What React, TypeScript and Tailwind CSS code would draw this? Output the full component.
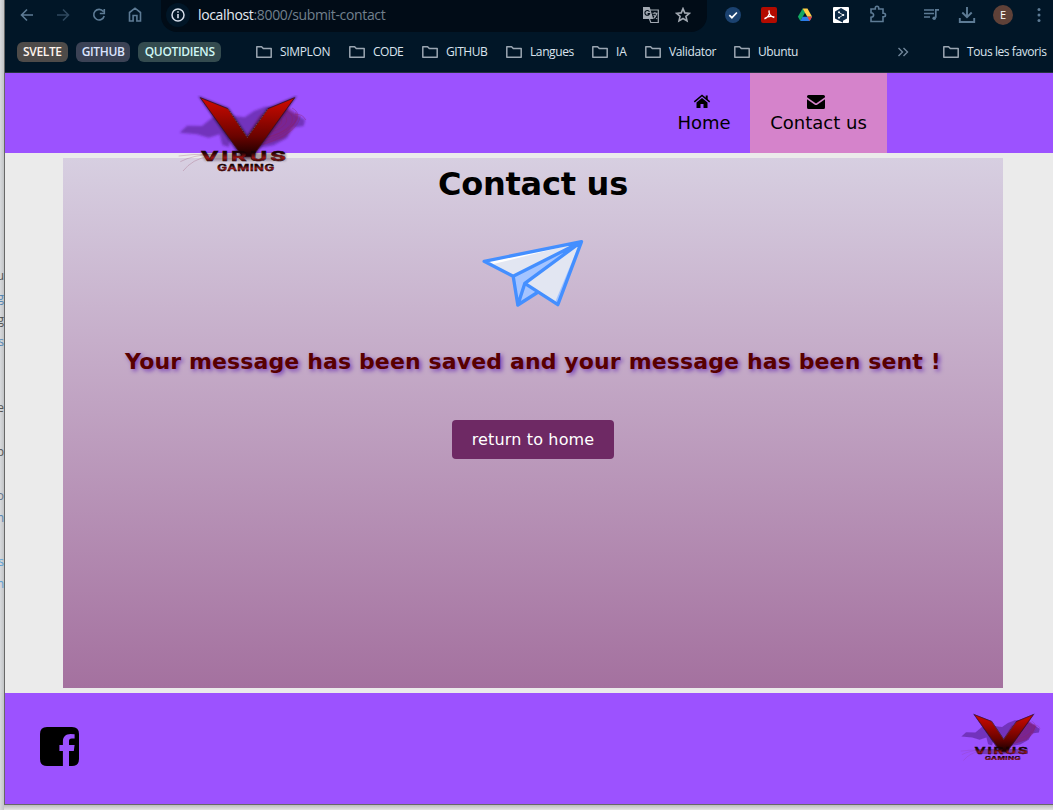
import React from "react";

const uiFont = "font-['Open_Sans','Noto_Sans',sans-serif]";
const pageFont = "font-['DejaVu_Sans',Verdana,sans-serif]";

function Folder() {
  return (
    <svg className="h-4 w-4 shrink-0" viewBox="0 0 16 16" fill="none" stroke="#9ba6b2" strokeWidth="1.5" strokeLinejoin="round">
      <path d="M.8 2.8h4.8l1.7 1.8h7.9v8.6H.8z" />
    </svg>
  );
}

function Bookmark({ label, box }: { label: string; box: string }) {
  return (
    <div className={`flex shrink-0 items-center gap-2 whitespace-nowrap text-[12px] font-medium text-[#dbe4ee] ${box}`}>
      <Folder />
      <span>{label}</span>
    </div>
  );
}

const bookmarks = [
  { label: "SIMPLON", box: "w-[93px] tracking-[-0.35px]" },
  { label: "CODE", box: "w-[73px] tracking-[-0.5px]" },
  { label: "GITHUB", box: "w-[84px] tracking-[-0.45px]" },
  { label: "Langues", box: "w-[86px] tracking-[-0.4px]" },
  { label: "IA", box: "w-[53px] tracking-[-0.2px]" },
  { label: "Validator", box: "w-[89px] tracking-[-0.35px]" },
  { label: "Ubuntu", box: "w-[70px] tracking-[-0.4px]" },
];

function Toolbar() {
  return (
    <div className="flex h-8 items-start text-[#5d7b95]">
      <svg className="h-8 w-[156px] shrink-0" viewBox="5 0 156 32" fill="none" stroke="currentColor" strokeWidth="1.6">
        <path d="M33 15H22M27 9.5 21.5 15 27 20.5" />
        <path opacity=".5" d="M57 15h11M63 9.500 68.500 15 63 20.500" />
        <path d="M103.300 11.500A5.300 5.300 0 1 0 104.200 16M104.300 9v4.500h-4.500" />
        <path d="M129.500 21v-8.500l5.500-4.300 5.500 4.300V21h-3.600v-5.500h-3.800V21z" />
      </svg>
      <div className="flex h-8 w-[546px] shrink-0 items-start rounded-b-2xl bg-[#010c17]">
        <svg className="ml-[5px] mt-[3px] h-6 w-6 shrink-0" viewBox="0 0 24 24">
          <circle cx="12" cy="12" r="12" fill="#011627" />
          <circle cx="12" cy="12" r="6" fill="none" stroke="#d6deeb" strokeWidth="1.5" />
          <path d="M12 11v4.200M12 8.300v1.500" stroke="#d6deeb" strokeWidth="1.600" />
        </svg>
        <span className="ml-2 mt-[5px] w-[444px] whitespace-nowrap text-[14px] leading-5 tracking-[-0.35px] text-[#71808d]">
          <span className="text-[#e4ebf2]">localhost</span>:8000/submit-contact
        </span>
        <svg className="mt-[6px] h-[18px] w-[18px] shrink-0" viewBox="0 0 18 18">
          <path d="M8 4h8.300v12.500H8.800L7.500 13" fill="none" stroke="#a2a9b2" strokeWidth="1.200" />
          <path d="M1 1h6.700l3.600 12H1z" fill="#a2a9b2" />
          <path d="M7.400 5.700A2.400 2.400 0 1 0 7.600 7.600H5.600" fill="none" stroke="#010c17" strokeWidth="1.100" />
          <path d="M10.500 7.300h5M12.900 6v1.300M14.800 7.500c-.6 2.300-1.800 3.800-3.300 5M11.700 8.800c.9 1.900 2 3 3.500 3.900" fill="none" stroke="#a2a9b2" strokeWidth="1.100" />
        </svg>
        <svg className="ml-[15px] mt-[7px] h-4 w-4 shrink-0" viewBox="0 0 16 16" fill="none" stroke="#a2a9b2" strokeWidth="1.600">
          <path d="m8 1.600 1.800 4.300 4.600.4-3.500 3 1.100 4.600L8 11.500l-4 2.400 1.100-4.600-3.500-3 4.600-.4z" />
        </svg>
      </div>
      <svg className="h-8 w-[346px] shrink-0" viewBox="707 0 346 32" fill="none" stroke="currentColor" strokeWidth="1.700">
        <circle cx="733" cy="15" r="8" fill="#1b4270" stroke="none" />
        <path d="m729.300 15.200 2.600 2.500 5-5.200" stroke="#fff" />
        <rect x="761" y="7" width="16" height="16" rx="2" fill="#b30b00" stroke="none" />
        <path d="M764.500 18.800c3.500-1.200 5.400-4.600 4.500-8.400M769 11c-.2 3 1.700 5.500 5.300 6.500M764.500 18.500c3-2 6.400-2.600 9.900-1.500" stroke="#fff" strokeWidth="1.300" />
        <g stroke="none">
          <path d="m802.600 8.500-4.700 8.200 2.400 4.200 4.900-8.300z" fill="#11a861" />
          <path d="M802.600 8.500h4.900l4.600 8.200h-4.800z" fill="#ffcf48" />
          <path d="M800.300 20.900h9.400l2.400-4.200h-9.500z" fill="#2b7de9" />
          <path d="m807.300 16.700 2.400 4.200 2.400-4.200z" fill="#ea4335" />
          <rect x="833" y="7" width="16" height="16" rx="1" fill="#fff" />
          <path d="m841 8 6 3.500v7l-4 2.300v2L835 18.500v-7z" fill="#0f2b46" />
        </g>
        <path d="m839 12.500 4.200 2.500-4.200 2.700" stroke="#fff" strokeWidth=".8" />
        <g fill="#fff" stroke="none"><circle cx="839" cy="12.300" r="1" /><circle cx="843.300" cy="15" r="1" /><circle cx="839" cy="17.700" r="1" /></g>
        <path strokeWidth="1.600" d="M871 9h4.300V8a1.700 1.700 0 0 1 3.400 0v1h4.300v4.300h.8a1.600 1.600 0 0 1 0 3.400h-.8V21.500h-12v-4.200c3.500-.4 3.500-4.200 0-4.600z" />
        <path d="M924 10h10M924 13.500h10M924 17h6M939 9.800h-3.200v8" />
        <circle cx="934.200" cy="18.200" r="1.800" fill="currentColor" stroke="none" />
        <path d="M967 7v10M962.300 12.500l4.700 4.700 4.700-4.700M959.800 18v4h14.400v-4" strokeWidth="1.900" />
        <circle cx="1003" cy="15" r="10" fill="#5f4138" stroke="none" />
        <text x="1003" y="19" fill="#fff" stroke="none" fontSize="11" textAnchor="middle">E</text>
        <g fill="currentColor" stroke="none"><circle cx="1039" cy="9.500" r="1.500" /><circle cx="1039" cy="15" r="1.500" /><circle cx="1039" cy="20.500" r="1.500" /></g>
      </svg>
    </div>
  );
}

function VirusLogo({ id, className }: { id: string; className: string }) {
  return (
    <svg className={className} viewBox="55 60 390 240">
      <defs>
        <linearGradient id={`${id}-v`} x1="0" y1="0" x2="0" y2="1">
          <stop offset="0" stopColor="#d10900" />
          <stop offset=".3" stopColor="#a20700" />
          <stop offset=".65" stopColor="#6b0300" />
          <stop offset="1" stopColor="#170000" />
        </linearGradient>
        <linearGradient id={`${id}-t`} x1="0" y1="0" x2="0" y2="1">
          <stop offset=".3" stopColor="#1a0202" />
          <stop offset=".6" stopColor="#9c1515" />
          <stop offset=".85" stopColor="#200202" />
        </linearGradient>
        <filter id={`${id}-b`} x="-20%" y="-20%" width="140%" height="140%"><feGaussianBlur stdDeviation="3.500" /></filter>
      </defs>
      <g filter={`url(#${id}-b)`}>
        <path d="M60 173 82 152l45 1 34-28 45-4 49 6 28-19 34-13 54 3 31 17 34 20-4 18-34 5-15 30-41 23-60 10-43-25-26-8-5 28-20-6-8-32-33 10-35-10z" fill="#56208f" opacity=".6" />
        <path d="m300 120 85-22 34 25-17 38-29 30-61 17-60-8z" fill="#801b69" opacity=".5" />
      </g>
      <g fill="none" stroke="#8c2468" strokeWidth="2" opacity=".6">
        <path d="M397 99c44 22 4 75-118 101M380 107c50 30-8 79-99 86M365 112c43 31-9 61-71 67M352 119c39 28-11 50-52 48M421 124c-4 41-69 75-128 88M408 112c14 43-49 76-113 91M405 118q25-2 33 17" />
      </g>
      <path d="M57 243q45-7 92-4M62 260q37-20 98-22M70 288q28-36 78-44" fill="none" stroke="#8c3550" strokeWidth="2" opacity=".35" />
      <path d="m122 68 83 33 58 86 62-86 80-33-127 179h-31z" fill="#17051d" stroke="#17051d" strokeWidth="5" opacity=".6" filter={`url(#${id}-b)`} />
      <path d="m122 68 83 33 58 86 62-86 80-33-127 177h-29z" fill={`url(#${id}-v)`} stroke="#3a1020" strokeWidth="2.500" />
      <path d="m205 101 58 86 62-86" fill="none" stroke="#b9a2ae" strokeWidth="2" strokeDasharray="3 3" opacity=".7" />
      <path d="M123 233h256v24H136z" fill="#20040f" opacity=".3" filter={`url(#${id}-b)`} />
      <g fill={`url(#${id}-t)`} stroke="#180105" paintOrder="stroke" className="font-['Inter',sans-serif] font-bold">
        <g transform="translate(123 258) scale(1.75 1)">
          <text fontSize="41" strokeWidth="1.500" textLength="146" lengthAdjust="spacing">VIRUS</text>
        </g>
        <g transform="translate(173 287) scale(1.55 1)">
          <text fontSize="25" strokeWidth="1.200" textLength="110" lengthAdjust="spacing">GAMING</text>
        </g>
      </g>
    </svg>
  );
}

const sideText = [
  { t: "u", c: "h-[22px] text-[#555]" },
  { t: "g", c: "h-[22px] text-[#5687b4]" },
  { t: "g", c: "h-[22px] text-[#555]" },
  { t: "s", c: "h-[66px] text-[#5687b4]" },
  { t: "re", c: "h-[44px] text-[#555]" },
  { t: "p", c: "h-[44px] text-[#555]" },
  { t: "o", c: "h-[22px] text-[#66758c]" },
  { t: "n", c: "h-[44px] text-[#5687b4]" },
  { t: "s", c: "h-[22px] text-[#5ba0d4]" },
  { t: "n", c: "h-[22px] text-[#5ba0d4]" },
];

export default function App() {
  return (
    <div className={`flex h-[810px] w-[1053px] overflow-hidden bg-[#e4e4e4] ${uiFont}`}>
      <aside className="flex h-[810px] w-1 shrink-0 flex-col overflow-hidden bg-linear-to-r from-[#d8dadd] to-[#c2c4c6] pt-[265px] text-[12px] leading-[22px]">
        {sideText.map((s, i) => (
          <span key={i} className={`flex shrink-0 justify-end ${s.c}`}>{s.t}</span>
        ))}
      </aside>
      <div className="flex w-[1049px] shrink-0 flex-col">
        <div className="flex h-[805px] shrink-0 flex-col border-b border-l border-[#686868]">
          <div className="flex h-[73px] shrink-0 flex-col border-b border-[#24333f] bg-[#011627]">
            <Toolbar />
            <div className="flex h-10 items-center pl-3">
              <span className="mr-2 flex h-5 w-[51px] items-center justify-center rounded-md bg-[#4e4b49] text-[12px] font-semibold tracking-[-0.35px] text-[#fff4ed]">SVELTE</span>
              <span className="mr-2 flex h-5 w-[55px] items-center justify-center rounded-md bg-[#3b4255] text-[12px] font-semibold tracking-[-0.35px] text-[#dbe5ff]">GITHUB</span>
              <span className="mr-[33px] flex h-5 w-[83px] items-center justify-center rounded-md bg-[#344b4f] text-[12px] font-semibold tracking-[-0.35px] text-[#cff7f4]">QUOTIDIENS</span>
              <div className="flex shrink-0 pl-[2px]">
                {bookmarks.map((b) => <Bookmark key={b.label} {...b} />)}
              </div>
              <svg className="ml-[93px] mr-[34px] h-3 w-3 shrink-0" viewBox="0 0 12 12" fill="none" stroke="#71869a" strokeWidth="1.400"><path d="m1.500 2 4 4-4 4M6.500 2l4 4-4 4" /></svg>
              <Bookmark label="Tous les favoris" box="w-[110px] tracking-[-0.42px]" />
            </div>
          </div>

          <header className={`flex h-20 shrink-0 items-start justify-between bg-[#9c52ff] pl-[173px] pr-[166px] text-[18px] leading-[21px] text-black ${pageFont}`}>
            <VirusLogo id="head" className="relative z-10 mt-[22px] h-20 w-[130px] shrink-0" />
            <nav className="flex h-20">
              <a className="flex w-[92px] flex-col items-center pt-5">
                <svg className="mr-[5px] h-[18px] w-[18px]" viewBox="0 0 18 18">
                  <path d="M9 5 3.500 9.500V15h4v-4h3v4h4V9.500z" />
                  <path d="M1.300 8.800 9 2.500l7.700 6.300" fill="none" stroke="#000" strokeWidth="1.500" />
                  <path d="M12.700 2.500h2v5l-2-1.700z" />
                </svg>
                <span className="mt-px">Home</span>
              </a>
              <a className="flex w-[137px] flex-col items-center bg-[#d583cb] pt-5">
                <svg className="mr-[5px] h-[18px] w-[18px]" viewBox="0 0 18 18">
                  <path d="M1.500 2h15Q18 2 18 3.500v.8l-9 6.300-9-6.300v-.8Q0 2 1.500 2z" />
                  <path d="m0 6.300 7.500 5.200q1.500 1 3 0L18 6.300v8.200q0 1.500-1.500 1.500h-15Q0 16 0 14.500z" />
                </svg>
                <span className="mt-px">Contact us</span>
              </a>
            </nav>
          </header>

          <main className={`flex h-[540px] shrink-0 bg-[#ebebeb] py-[5px] pl-[58px] ${pageFont}`}>
            <section className="flex h-[530px] w-[940px] flex-col items-center bg-linear-to-b from-[#d7cfe1] to-[#a4719f]">
              <h1 className="mt-[7px] text-[32px] font-bold leading-[38px] tracking-[-0.25px] text-black">Contact us</h1>
              <svg className="ml-px mt-[36px] h-[70px] w-[103px] shrink-0" viewBox="38 41 306 210" strokeLinejoin="round" strokeLinecap="round">
                <path d="m335 49-205 104 14 86 63-38 57 37z" fill="#a4c4ff" />
                <path d="M43 108 335 49 130 153z" fill="#e2e6f2" />
                <path d="m54 107 250-49-233 58z" fill="#fff" />
                <path d="M335 49 165 174l99 64z" fill="#e2e6f2" />
                <path d="m326 62-71 170 9 6 71-189z" fill="#a4c4ff" />
                <path d="M43 108 335 49 130 153zm87 45 14 86 21-65L335 49l-71 189-99-64M144 239l61-39" fill="none" stroke="#448fff" strokeWidth="10" />
              </svg>
              <p className="mt-10 whitespace-nowrap text-[22px] font-bold leading-[26px] tracking-[0.13px] text-[#580000] [text-shadow:2px_2px_4px_#7741b5]">Your message has been saved and your message has been sent !</p>
              <button className="mt-[45px] flex h-[39px] w-[162px] items-center justify-center rounded bg-[#6e2964] pt-px text-[16px] tracking-[0.15px] text-white">return to home</button>
            </section>
          </main>

          <footer className="flex h-[111px] shrink-0 items-start justify-between bg-[#9c52ff] pl-[35px] pr-[11px]">
            <svg className="mt-[34px] h-[39px] w-[39px]" viewBox="0 0 39 39">
              <path d="M7 0h25q7 0 7 7v25q0 7-7 7h-3V24h4.800l.8-6H29v-3.800c0-1.700.7-2.700 2.800-2.700h2.800V7.300A25 25 0 0 0 30.600 7c-4.700 0-7.700 2.700-7.700 7.500V18h-3.500v6h3.500v15H7q-7 0-7-7V7q0-7 7-7z" />
            </svg>
            <VirusLogo id="foot" className="mt-5 h-[50px] w-[82px]" />
          </footer>
        </div>
        <div className="h-[5px] shrink-0 bg-linear-to-b from-[#bdbdbd] to-[#e5e5e5]" />
      </div>
    </div>
  );
}
